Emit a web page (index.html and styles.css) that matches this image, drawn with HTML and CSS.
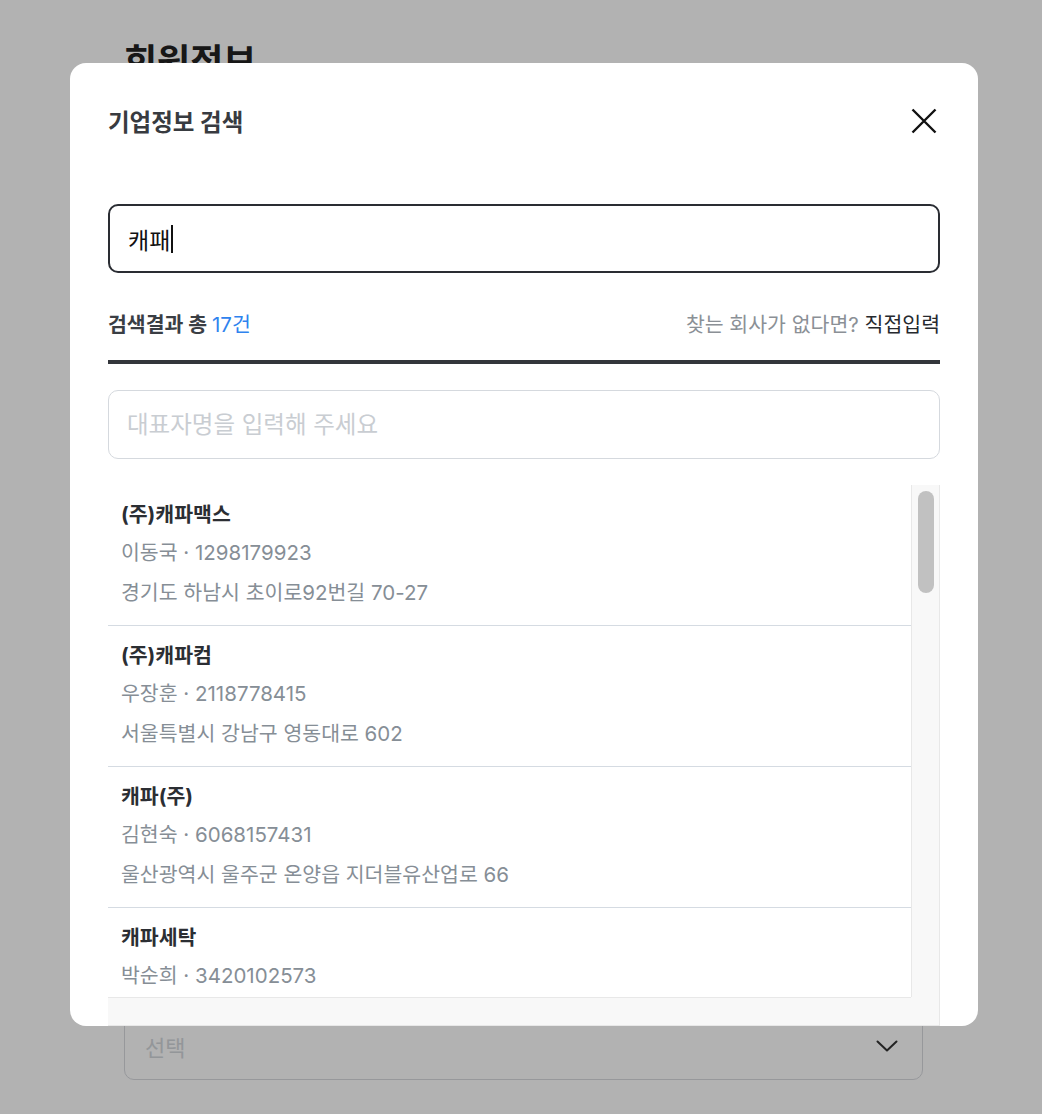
FILE: index.html
```html
<!DOCTYPE html>
<html lang="ko">
<head>
  <meta charset="UTF-8" />
  <meta name="viewport" content="width=device-width, initial-scale=1.0"/>
  <title>회원정보</title>
  <link rel="stylesheet" href="styles.css">
</head>
<body>

  <!-- page behind the modal -->
  <main class="page">
    <h1 class="page-title">회원정보</h1>
    <div class="select-box">
      <span>선택</span>
      <svg width="22" height="12" viewBox="0 0 22 12"><path d="M1.5 1.5 L11 10.5 L20.5 1.5" fill="none" stroke="#333" stroke-width="2" stroke-linecap="round" stroke-linejoin="round"/></svg>
    </div>
  </main>

  <div class="dim"></div>

  <!-- 기업정보 검색 modal -->
  <section class="modal">
    <div class="modal-header">
      <h2 class="modal-title">기업정보 검색</h2>
      <button class="close-btn" aria-label="닫기">
        <svg width="26" height="26" viewBox="0 0 26 26"><path d="M1.5 1.5 L24.5 24.5 M24.5 1.5 L1.5 24.5" fill="none" stroke="#111" stroke-width="2.4"/></svg>
      </button>
    </div>

    <div class="search-box">
      <span>캐패</span><span class="caret"></span>
    </div>

    <div class="result-bar">
      <div class="result-count">검색결과 총 <em>17건</em></div>
      <div class="result-help">찾는 회사가 없다면? <a href="#">직접입력</a></div>
    </div>

    <input class="ceo-input" type="text" placeholder="대표자명을 입력해 주세요">

    <div class="result-frame">
      <ul class="result-list">
        <li class="result-item">
          <div class="item-name">(주)캐파맥스</div>
          <div class="item-meta">이동국 · 1298179923</div>
          <div class="item-meta">경기도 하남시 초이로92번길 70-27</div>
        </li>
        <li class="result-item">
          <div class="item-name">(주)캐파컴</div>
          <div class="item-meta">우장훈 · 2118778415</div>
          <div class="item-meta">서울특별시 강남구 영동대로 602</div>
        </li>
        <li class="result-item">
          <div class="item-name">캐파(주)</div>
          <div class="item-meta">김현숙 · 6068157431</div>
          <div class="item-meta">울산광역시 울주군 온양읍 지더블유산업로 66</div>
        </li>
        <li class="result-item">
          <div class="item-name">캐파세탁</div>
          <div class="item-meta">박순희 · 3420102573</div>
        </li>
      </ul>
      <div class="vscroll"><span class="vthumb"></span></div>
      <div class="hscroll"></div>
      <div class="scroll-corner"></div>
    </div>
  </section>

</body>
</html>
```

FILE: styles.css
```css
body {
  margin: 0;
  background: #fff;
  font-family: Inter, "Noto Sans CJK KR", sans-serif;
  color: #26292e;
}
/* ---------- page behind ---------- */
.page {
  padding: 38px 119px 0 124px;
}
.page-title {
  margin: 0;
  font-size: 36px;
  line-height: 48px;
  font-weight: 700;
  color: #222;
}
.select-box {
  margin-top: 926px;
  height: 68px;
  box-sizing: border-box;
  border: 1.5px solid #d8dadf;
  border-radius: 10px;
  padding: 0 24px 0 20px;
  display: flex;
  align-items: center;
  justify-content: space-between;
  font-size: 22px;
  color: #d3d7dc;
}
.dim {
  position: fixed;
  inset: 0;
  background: rgba(0,0,0,0.3);
}
/* ---------- modal ---------- */
.modal {
  position: fixed;
  left: 70px;
  top: 63px;
  width: 908px;
  height: 963px;
  box-sizing: border-box;
  padding: 38px 38px 0;
  background: #fff;
  border-radius: 16px;
  overflow: hidden;
  display: flex;
  flex-direction: column;
}
.modal-header {
  height: 42px;
  display: flex;
  align-items: center;
  justify-content: space-between;
}
.modal-title {
  margin: 0 0 2px;
  font-size: 23.5px;
  font-weight: 700;
  color: #383b40;
}
.close-btn {
  width: 32px;
  height: 32px;
  padding: 0;
  margin-top: -3px;
  border: none;
  background: none;
  display: flex;
  align-items: center;
  justify-content: center;
  cursor: pointer;
}
.search-box {
  margin-top: 61px;
  height: 69px;
  box-sizing: border-box;
  border: 2px solid #2a2d33;
  border-radius: 10px;
  padding: 0 18px;
  display: flex;
  align-items: center;
  font-size: 23px;
  color: #111;
}
.caret {
  width: 1.5px;
  height: 28px;
  margin-left: 1px;
  background: #111;
}
.result-bar {
  margin-top: 30px;
  height: 40px;
  padding-bottom: 17px;
  border-bottom: 4px solid #33363b;
  display: flex;
  align-items: center;
  justify-content: space-between;
  font-size: 20.5px;
}
.result-count {
  font-weight: 700;
  color: #3a3e44;
}
.result-count em {
  font-style: normal;
  font-weight: 400;
  color: #2f83ee;
}
.result-help { color: #8b9096; }
.result-help a {
  color: #26292e;
  text-decoration: none;
}
.ceo-input {
  margin-top: 26px;
  height: 69px;
  width: 100%;
  box-sizing: border-box;
  border: 1.5px solid #d5d9de;
  border-radius: 10px;
  padding: 0 18px;
  font-family: inherit;
  font-size: 23.5px;
  color: #26292e;
  outline: none;
}
.ceo-input::placeholder { color: #c9cdd2; }
/* ---------- result list + scrollbars ---------- */
.result-frame {
  margin-top: 26px;
  flex: none;
  height: 541px;
  display: grid;
  grid-template-columns: 1fr 29px;
  grid-template-rows: 512px 29px;
}
.result-list {
  list-style: none;
  margin: 0;
  padding: 0;
  overflow: hidden;
}
.result-item {
  padding: 12px 13px 12px;
  border-bottom: 1px solid #d5dbe2;
}
.item-name {
  line-height: 36px;
  font-size: 20.5px;
  font-weight: 700;
  color: #2b2e33;
}
.item-meta {
  line-height: 40px;
  font-size: 20.5px;
  color: #868e96;
}
.vscroll {
  background: #f8f8f8;
  border-left: 1px solid #e8e8e8;
  border-right: 1px solid #e8e8e8;
  padding: 6px 5px 0 6px;
}
.vthumb {
  display: block;
  height: 102px;
  border-radius: 8px;
  background: #c1c1c1;
}
.hscroll {
  background: #f8f8f8;
  border-top: 1px solid #e8e8e8;
  border-bottom: 1px solid #e8e8e8;
}
.scroll-corner {
  background: #f8f8f8;
  border-right: 1px solid #e8e8e8;
  border-bottom: 1px solid #e8e8e8;
}
```
